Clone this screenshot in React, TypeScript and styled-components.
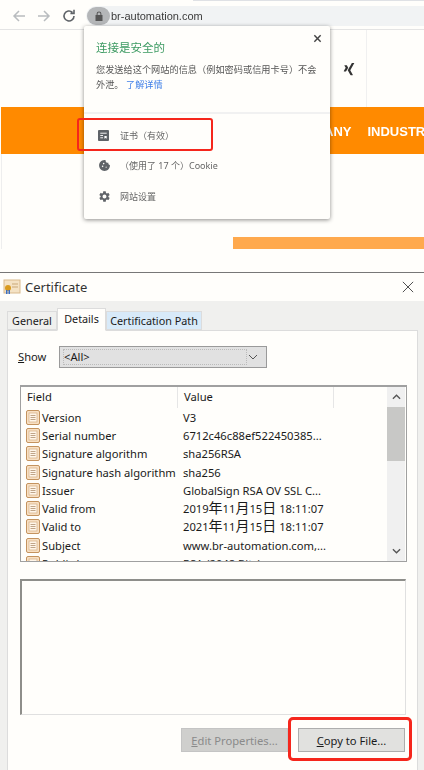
import React from 'react';
import styled, {createGlobalStyle} from "styled-components";
import {MdCookie, MdSettings} from "react-icons/md";
import {FaXing} from "react-icons/fa";

const GlobalStyle = createGlobalStyle`
    html, body {
        margin: 0;
        padding: 0;
        background: #fffefb;
    }
    body {
        width: 424px;
        height: 770px;
        overflow: hidden;
        font-family: "Noto Sans", "Noto Sans CJK SC", sans-serif;
    }
`

const fields = [
    {name: 'Version', value: 'V3'},
    {name: 'Serial number', value: '6712c46c88ef522450385...'},
    {name: 'Signature algorithm', value: 'sha256RSA'},
    {name: 'Signature hash algorithm', value: 'sha256'},
    {name: 'Issuer', value: 'GlobalSign RSA OV SSL C...'},
    {name: 'Valid from', value: '2019年11月15日 18:11:07'},
    {name: 'Valid to', value: '2021年11月15日 18:11:07'},
    {name: 'Subject', value: 'www.br-automation.com,...'},
    {name: 'Public key', value: 'RSA (2048 Bits)'},
];

// the date values use bigger CJK glyphs than the latin text around them
const renderValue = (value: string) =>
    value.split(/([年月日])/).map((part, i) =>
        i % 2 ? <Cjk key={i}>{part}</Cjk> : part
    );

const FieldIcon = () => (
    <IconSvg width="14" height="15" viewBox="0 0 14 15">
        <rect x="0.5" y="0.5" width="13" height="14" rx="1.5" fill="#f8e0c4" stroke="#c4935f"/>
        <rect x="3" y="3" width="8" height="9" fill="#fff6ea" stroke="#d8b48c" strokeWidth="0.8"/>
        <path d="M4.5 5.5h5M4.5 7.5h5M4.5 9.5h5" stroke="#b09070" strokeWidth="0.8"/>
    </IconSvg>
);

const App = () => {
    return (
        <Page>
            <GlobalStyle/>
            <Browser>
                <TabEdge/>
                <Toolbar>
                    <NavIcon viewBox="0 0 16 16" $color="#b9bcbf">
                        <path d="M14 8H3M8 3L3 8l5 5" fill="none" strokeWidth="1.5"/>
                    </NavIcon>
                    <NavIcon viewBox="0 0 16 16" $color="#b9bcbf">
                        <path d="M2 8h11M8 3l5 5-5 5" fill="none" strokeWidth="1.5"/>
                    </NavIcon>
                    <NavIcon viewBox="0 0 16 16" $color="#5f6368">
                        <path d="M13 8a5 5 0 1 1-1.6-3.7M13 1.8v3.6H9.4" fill="none" strokeWidth="1.6"/>
                    </NavIcon>
                    <AddressBar>
                        <LockBadge>
                            <svg width="8" height="10" viewBox="0 0 8 10">
                                <path d="M1.6 4V2.8a2.4 2.4 0 0 1 4.8 0V4H7.5v6H.5V4zM2.6 4h2.8V2.8a1.4 1.4 0 0 0-2.8 0z" fill="#555"/>
                            </svg>
                        </LockBadge>
                        <Url>br-automation.com</Url>
                    </AddressBar>
                </Toolbar>
                <SiteHeader>
                    <SocialCell>
                        <FaXing size={14} color="#333"/>
                    </SocialCell>
                </SiteHeader>
                <OrangeNav>
                    <NavLink>COMPANY</NavLink>
                    <NavLink>INDUSTRIES</NavLink>
                </OrangeNav>
                <SiteBody>
                    <OrangeStrip/>
                </SiteBody>
                <Popup>
                    <PopupTop>
                        <CloseMark viewBox="0 0 10 10">
                            <path d="M1.5 1.5l7 7M8.5 1.5l-7 7" stroke="#444" strokeWidth="1.6"/>
                        </CloseMark>
                        <PopupTitle>连接是安全的</PopupTitle>
                        <PopupText>
                            您发送给这个网站的信息（例如密码或信用卡号）不会外泄。 <LearnMore>了解详情</LearnMore>
                        </PopupText>
                    </PopupTop>
                    <MenuList>
                        <MenuRow>
                            <MenuIcon>
                                <svg width="11" height="11" viewBox="0 0 12 12">
                                    <rect width="12" height="12" rx="1" fill="#5f6368"/>
                                    <path d="M2.5 3.5h7M2.5 6h3M2.5 8.5h3" stroke="#fff" strokeWidth="1"/>
                                    <path d="M7 6.5h2.5v3l-1.2-.8-1.3.8z" fill="#fff"/>
                                </svg>
                            </MenuIcon>
                            <span>证书（有效）</span>
                        </MenuRow>
                        <MenuRow>
                            <MenuIcon><MdCookie size={13} color="#5f6368"/></MenuIcon>
                            <span>（使用了 17 个）Cookie</span>
                        </MenuRow>
                        <MenuRow>
                            <MenuIcon><MdSettings size={13} color="#5f6368"/></MenuIcon>
                            <span>网站设置</span>
                        </MenuRow>
                    </MenuList>
                    <CertHighlight/>
                </Popup>
            </Browser>

            <Dialog>
                <TitleBar>
                    <CertIcon width="18" height="16" viewBox="0 0 18 16">
                        <rect x="1" y="1" width="16" height="13" fill="#f4e2c4" stroke="#d9b98c"/>
                        <path d="M9 5h6M9 8h6" stroke="#c9a878"/>
                        <circle cx="5" cy="9" r="3" fill="#d99a1e"/>
                        <path d="M3 11h1.5v4H3zM5.5 11H7v4H5.5z" fill="#3b6fc4"/>
                    </CertIcon>
                    <DialogTitle>Certificate</DialogTitle>
                    <WindowClose viewBox="0 0 14 14">
                        <path d="M1 1l12 12M13 1L1 13" stroke="#333" strokeWidth="1"/>
                    </WindowClose>
                </TitleBar>
                <DialogBody>
                    <Tabs>
                        <Tab $width={50}>General</Tab>
                        <Tab $width={49} $active>Details</Tab>
                        <Tab $width={96} $hover>Certification Path</Tab>
                    </Tabs>
                    <TabPanel>
                        <ShowRow>
                            <ShowLabel><u>S</u>how</ShowLabel>
                            <Select>
                                <SelectValue>&lt;All&gt;</SelectValue>
                                <svg width="10" height="6" viewBox="0 0 10 6">
                                    <path d="M1 1l4 4 4-4" fill="none" stroke="#555" strokeWidth="1"/>
                                </svg>
                            </Select>
                        </ShowRow>
                        <ListBox>
                            <ListMain>
                                <ListHeader>
                                    <HeaderCell $width={157}>Field</HeaderCell>
                                    <HeaderCell $width={156}>Value</HeaderCell>
                                </ListHeader>
                                <Rows>
                                    {fields.map(f => (
                                        <Row key={f.name}>
                                            <FieldCell><FieldIcon/>{f.name}</FieldCell>
                                            <ValueCell>{renderValue(f.value)}</ValueCell>
                                        </Row>
                                    ))}
                                </Rows>
                            </ListMain>
                            <Scrollbar>
                                <ScrollArrow viewBox="0 0 10 6">
                                    <path d="M1 5l4-4 4 4" fill="none" stroke="#555" strokeWidth="1.5"/>
                                </ScrollArrow>
                                <ScrollThumb/>
                                <ScrollArrow viewBox="0 0 10 6">
                                    <path d="M1 1l4 4 4-4" fill="none" stroke="#555" strokeWidth="1.5"/>
                                </ScrollArrow>
                            </Scrollbar>
                        </ListBox>
                        <DetailBox/>
                        <Buttons>
                            <Button disabled><u>E</u>dit Properties...</Button>
                            <Button><u>C</u>opy to File...</Button>
                            <CopyHighlight/>
                        </Buttons>
                    </TabPanel>
                </DialogBody>
            </Dialog>
        </Page>
    );
};

export default App;

const Page = styled.div`
    width: 424px;
    height: 770px;
    display: flex;
    flex-direction: column;
    overflow: hidden;
    filter: blur(0.3px);
`
const Browser = styled.section`
    position: relative;
    height: 272px;
    flex: none;
    border-bottom: 1px solid #777;
    box-sizing: content-box;
`
const TabEdge = styled.div`
    height: 1px;
    margin-left: 193px;
    background: #dfe1e5;
`
const Toolbar = styled.div`
    height: 26px;
    padding: 2px 0 0 11px;
    display: flex;
    align-items: center;
    gap: 9px;
    border-bottom: 1px solid #e4e4e4;
    box-sizing: content-box;
`
const NavIcon = styled.svg<{ $color: string }>`
    width: 16px;
    height: 16px;
    stroke: ${p => p.$color};
`
const AddressBar = styled.div`
    flex: 1;
    height: 20px;
    display: flex;
    align-items: center;
    gap: 1px;
    padding-left: 1px;
    background: #f1f3f4;
    border-radius: 10px 0 0 10px;
`
const LockBadge = styled.div`
    width: 23px;
    height: 18px;
    border-radius: 9px;
    background: #b4b6b8;
    display: flex;
    align-items: center;
    justify-content: center;
`
const Url = styled.span`
    font-family: "Liberation Sans", sans-serif;
    font-size: 11px;
    color: #3c3c3c;
`
const SiteHeader = styled.div`
    height: 77px;
    display: flex;
    justify-content: flex-end;
    padding-right: 57px;
`
const SocialCell = styled.div`
    width: 35px;
    display: flex;
    align-items: center;
    justify-content: center;
    border-right: 1px solid #f0f0f0;
`
const OrangeNav = styled.nav`
    height: 47px;
    margin-left: 1px;
    background: #ff8a00;
    display: flex;
    align-items: center;
    gap: 16px;
    padding: 2px 0 0 285px;
    box-sizing: border-box;
    overflow: hidden;
    white-space: nowrap;
`
const NavLink = styled.span`
    font-family: "Liberation Sans", sans-serif;
    font-size: 13px;
    font-weight: 700;
    color: #fff;
`
const SiteBody = styled.div`
    height: 95px;
    margin-left: 1px;
    border-left: 1px solid #eee;
    display: flex;
    align-items: flex-end;
    justify-content: flex-end;
`
const OrangeStrip = styled.div`
    width: 191px;
    height: 12px;
    background: #ffa94d;
`
const Popup = styled.div`
    position: absolute;
    left: 84px;
    top: 26px;
    width: 246px;
    height: 193px;
    background: #fffefb;
    border-radius: 2px;
    box-shadow: 0 1px 4px rgba(0, 0, 0, 0.45);
    display: flex;
    flex-direction: column;
`
const PopupTop = styled.div`
    position: relative;
    height: 88px;
    box-sizing: border-box;
    padding: 14px 12px 0;
    border-bottom: 2px solid #f1f1f1;
`
const CloseMark = styled.svg`
    position: absolute;
    right: 8px;
    top: 8px;
    width: 9px;
    height: 9px;
`
const PopupTitle = styled.div`
    font-size: 11.5px;
    line-height: 16px;
    color: #3d9a62;
    margin-bottom: 6px;
`
const PopupText = styled.div`
    font-size: 9.2px;
    line-height: 15px;
    color: #555;
`
const LearnMore = styled.span`
    color: #3f7fe8;
`
const MenuList = styled.div`
    display: flex;
    flex-direction: column;
    padding-top: 6px;
`
const MenuRow = styled.div`
    height: 30.5px;
    display: flex;
    align-items: center;
    padding-left: 14px;
    font-size: 9px;
    color: #666;
`
const MenuIcon = styled.span`
    width: 22px;
    flex: none;
    display: flex;
    align-items: center;
`
const CertHighlight = styled.div`
    position: absolute;
    left: -7px;
    top: 92px;
    width: 136px;
    height: 33px;
    border: 2px solid #f5261c;
    border-radius: 3px;
    box-sizing: border-box;
`
const Dialog = styled.section`
    flex: 1;
    display: flex;
    flex-direction: column;
    min-height: 0;
    font-size: 11.2px;
    color: #1a1a1a;
`
const TitleBar = styled.header`
    height: 28px;
    display: flex;
    align-items: center;
    padding: 0 10px 0 3px;
    gap: 4px;
    background: #fffefb;
`
const IconSvg = styled.svg`
    flex: none;
`
const CertIcon = styled.svg`
    flex: none;
`
const DialogTitle = styled.span`
    font-size: 13px;
    color: #333;
    flex: 1;
`
const WindowClose = styled.svg`
    width: 12px;
    height: 12px;
`
const DialogBody = styled.div`
    flex: 1;
    background: #f0f0ee;
    padding: 7px 6px 0 7px;
    display: flex;
    flex-direction: column;
`
const Tabs = styled.div`
    display: flex;
    align-items: flex-end;
    height: 22px;
    position: relative;
    z-index: 1;
`
const Tab = styled.div<{ $active?: boolean; $hover?: boolean; $width: number }>`
    width: ${p => p.$width}px;
    height: ${p => (p.$active ? '23px' : '19px')};
    line-height: ${p => (p.$active ? '19px' : '18px')};
    box-sizing: border-box;
    text-align: center;
    font-size: 10.8px;
    white-space: nowrap;
    border: 1px solid #dcdcdc;
    border-bottom: ${p => (p.$active ? '1px solid #fffefb' : '1px solid #dcdcdc')};
    background: ${p => (p.$active ? '#fffefb' : p.$hover ? '#d8eaf9' : '#f0f0ee')};
    margin-bottom: ${p => (p.$active ? '-1px' : '0')};
`
const TabPanel = styled.div`
    flex: 1;
    background: #fffefb;
    border: 1px solid #dcdcdc;
    border-bottom: none;
    padding: 15px 10px 0 12px;
    display: flex;
    flex-direction: column;
`
const ShowRow = styled.div`
    display: flex;
    align-items: center;
    height: 22px;
    margin-left: -2px;
    line-height: 20px;
`
const ShowLabel = styled.span`
    width: 41px;
`
const Select = styled.div`
    width: 208px;
    height: 22px;
    box-sizing: border-box;
    background: #e1e1e1;
    border: 1px solid #9a9a9a;
    display: flex;
    align-items: center;
    padding: 0 8px 0 3px;
    justify-content: space-between;
`
const SelectValue = styled.span`
    flex: none;
    width: 184px;
    height: 16px;
    line-height: 14px;
    box-sizing: border-box;
    border: 1px dotted #bbb;
`
const ListBox = styled.div`
    margin-top: 17px;
    height: 177px;
    box-sizing: border-box;
    border: 1px solid #a0a0a0;
    border-top-width: 2px;
    display: flex;
    overflow: hidden;
`
const ListMain = styled.div`
    flex: 1;
    min-width: 0;
`
const ListHeader = styled.div`
    display: flex;
    height: 21px;
`
const HeaderCell = styled.div<{ $width: number }>`
    width: ${p => p.$width}px;
    box-sizing: border-box;
    padding-left: 6px;
    line-height: 20px;
    border-right: 1px solid #e6e6e6;
`
const Rows = styled.div`
    display: flex;
    flex-direction: column;
`
const Row = styled.div`
    display: flex;
    height: 18.3px;
    flex: none;
    align-items: center;
    white-space: nowrap;
`
const FieldCell = styled.div`
    width: 157px;
    flex: none;
    padding-left: 5px;
    box-sizing: border-box;
    display: flex;
    align-items: center;
    gap: 2px;
`
const ValueCell = styled.div`
    padding-left: 5px;
`
const Cjk = styled.span`
    font-size: 14px;
    line-height: 1;
`
const Scrollbar = styled.div`
    width: 18px;
    flex: none;
    margin-right: 1px;
    background: #f0f0f0;
    display: flex;
    flex-direction: column;
    align-items: center;
`
const ScrollArrow = styled.svg`
    width: 9px;
    height: 6px;
    margin: 7px 0;
    flex: none;
`
const ScrollThumb = styled.div`
    width: 100%;
    height: 54px;
    background: #c8c8c6;
    margin-bottom: auto;
`
const DetailBox = styled.div`
    margin-top: 17px;
    width: 386px;
    height: 136px;
    box-sizing: border-box;
    border: 1px solid #e0e0e0;
    border-top: 2px solid #8e8e8a;
    border-left: 2px solid #8e8e8a;
`
const Buttons = styled.div`
    position: relative;
    margin-top: 13px;
    display: flex;
    justify-content: flex-end;
    gap: 10px;
    width: 385px;
`
const Button = styled.button`
    width: 107px;
    height: 24px;
    padding: 0;
    font-family: inherit;
    font-size: 11.2px;
    color: #1a1a1a;
    background: #e1e1df;
    border: 1px solid #adadad;
    &:disabled {
        color: #8a8a8a;
        background: #cfcfcd;
        border-color: #c4c4c4;
    }
`
const CopyHighlight = styled.div`
    position: absolute;
    right: -7px;
    top: -11px;
    width: 124px;
    height: 44px;
    box-sizing: border-box;
    border: 3px solid #f5261c;
    border-radius: 5px;
`
